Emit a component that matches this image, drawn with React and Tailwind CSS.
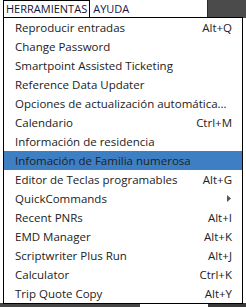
import React from 'react';

const items = [
  { label: 'Reproducir entradas', key: 'Alt+Q' },
  { label: 'Change Password' },
  { label: 'Smartpoint Assisted Ticketing' },
  { label: 'Reference Data Updater' },
  { label: 'Opciones de actualización automática...' },
  { label: 'Calendario', key: 'Ctrl+M' },
  { label: 'Información de residencia' },
  { label: 'Infomación de Familia numerosa', active: true },
  { label: 'Editor de Teclas programables', key: 'Alt+G' },
  { label: 'QuickCommands', sub: true },
  { label: 'Recent PNRs', key: 'Alt+I' },
  { label: 'EMD Manager', key: 'Alt+K' },
  { label: 'Scriptwriter Plus Run', key: 'Alt+J' },
  { label: 'Calculator', key: 'Ctrl+K' },
  { label: 'Trip Quote Copy', key: 'Alt+Y' },
];

export default function App() {
  return (
    <div className="relative w-[246px] h-[307px] overflow-hidden bg-white text-[#222] text-[11.5px] font-['Open_Sans','Noto_Sans',sans-serif]">

      {/* menu bar */}
      <div className="flex h-[18px]">
        <div className="flex w-[208px] bg-white pl-[3px] border-r border-[#2a2a2a] text-[11px]">
          <div className="h-[18px] px-[2px] border border-black leading-[16px] text-[#141432]">HERRAMIENTAS</div>
          <div className="h-[18px] px-[3px] leading-[18px] text-[#141450]">AYUDA</div>
        </div>
        <div className="flex-1 bg-[#4b4b4b]" />
      </div>

      {/* what sits under the menu */}
      <div className="absolute left-0 right-0 bottom-0 h-[4px] flex">
        <div className="w-[140px] bg-[#474747]" />
        <div className="w-[68px] bg-white" />
        <div className="flex-1 bg-[#3a3a3a]" />
      </div>

      {/* dropdown */}
      <div className="absolute left-[3px] top-[17px] w-[240px] bg-white border border-black">
        {items.map((it) => (
          <div
            key={it.label}
            className={`flex items-center h-[19px] pl-[11px] pr-[10px] whitespace-nowrap ${it.active ? 'bg-[#3d7fc2]' : ''}`}
          >
            <span className="flex-1">{it.label}</span>
            {it.key && <span>{it.key}</span>}
            {it.sub && (
              <svg width="4" height="7" viewBox="0 0 4 7" className="mr-[1px]">
                <path d="M0 0 L4 3.5 L0 7 Z" fill="#555" />
              </svg>
            )}
          </div>
        ))}
      </div>
    </div>
  );
}
